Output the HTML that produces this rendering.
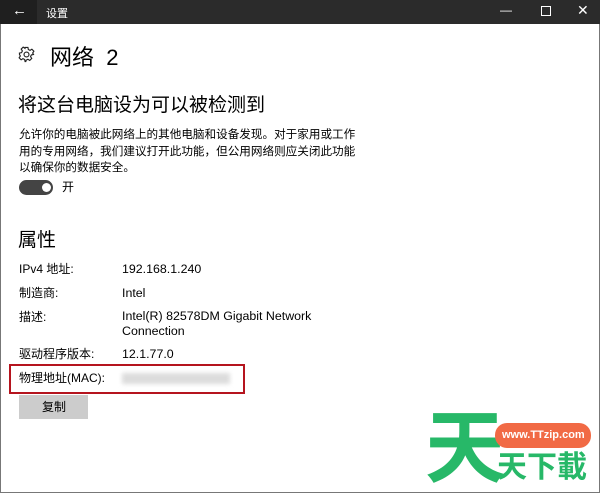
<!DOCTYPE html>
<html><head><meta charset="utf-8"><style>
body{margin:0;width:600px;height:493px;overflow:hidden;background:#fff;font-family:"Liberation Sans","Noto Sans CJK SC",sans-serif;color:#000;position:relative}
.tb{position:absolute;left:0;top:0;width:600px;height:24px;background:#2b2b2b;color:#fff}
.bk{position:absolute;left:0;top:0;width:37px;height:24px;background:#1f1f1f}
.a{position:absolute;white-space:nowrap}
.bl{position:absolute;left:0;top:24px;width:1px;height:469px;background:#777}
.br{position:absolute;right:0;top:24px;width:1px;height:469px;background:#777}
.bb{position:absolute;left:0;bottom:0;width:600px;height:1px;background:#777}
.s{font-size:12px;line-height:16px}
.v{font-size:12.4px;line-height:16px}
</style></head><body>
<div class="tb"><div class="bk"></div>
<span class="a" style="left:12px;top:2px;font-size:15px">←</span>
<span class="a" style="left:46px;top:5px;font-size:11px">设置</span>
<span class="a" style="left:500px;top:3px;font-size:12px">—</span>
<span class="a" style="left:541px;top:6px;width:8px;height:8px;border:1px solid #fff"></span>
<span class="a" style="left:577px;top:2px;font-size:14px">✕</span>
</div>
<div class="bl"></div><div class="br"></div><div class="bb"></div>
<svg class="a" style="left:18px;top:46px" width="17" height="17" viewBox="0 0 24 24" fill="none" stroke="#222" stroke-width="1.6"><path d="M10 2h4l.6 3 2.4 1.2 2.6-1.7 2.8 2.8-1.7 2.6L21.9 12l0 0 -3 .6-1.2 2.4 1.7 2.6-2.8 2.8-2.6-1.7L11.6 19.9 11 22H10l-.6-3-2.4-1.2-2.6 1.7-2.8-2.8 1.7-2.6L2.1 12 2 10l3-.6 1.2-2.4-1.7-2.6 2.8-2.8 2.6 1.7L10 2z"/><circle cx="12" cy="12" r="3.5"/></svg>
<span class="a" style="left:50px;top:40px;font-size:22px">网络&nbsp;&nbsp;2</span>
<span class="a" style="left:18px;top:90px;font-size:19px">将这台电脑设为可以被检测到</span>
<div class="a" style="left:19px;top:127px;font-size:11.6px;line-height:16.5px;white-space:normal;width:342px">允许你的电脑被此网络上的其他电脑和设备发现。对于家用或工作用的专用网络，我们建议打开此功能，但公用网络则应关闭此功能以确保你的数据安全。</div>
<div class="a" style="left:19px;top:180px;width:34px;height:15px;border-radius:8px;background:#444"></div>
<div class="a" style="left:42px;top:183px;width:9px;height:9px;border-radius:50%;background:#fff"></div>
<span class="a s" style="left:62px;top:179px">开</span>
<span class="a" style="left:18px;top:225px;font-size:19px">属性</span>
<span class="a s" style="left:19px;top:261px">IPv4 地址:</span><span class="a v" style="left:122px;top:261px">192.168.1.240</span>
<span class="a s" style="left:19px;top:285px">制造商:</span><span class="a v" style="left:122px;top:285px">Intel</span>
<span class="a s" style="left:19px;top:309px">描述:</span><span class="a v" style="left:122px;top:309px;line-height:15px">Intel(R) 82578DM Gigabit Network<br>Connection</span>
<span class="a s" style="left:19px;top:346px">驱动程序版本:</span><span class="a v" style="left:122px;top:346px">12.1.77.0</span>
<div class="a" style="left:9px;top:364px;width:232px;height:26px;border:2px solid #b5141e"></div>
<span class="a s" style="left:19px;top:370px">物理地址(MAC):</span>
<div class="a" style="left:122px;top:373px;width:108px;height:11px;background:#dcdcdc;filter:blur(2px)"></div>
<div class="a" style="left:19px;top:395px;width:69px;height:24px;background:#ccc"></div>
<span class="a s" style="left:42px;top:399px">复制</span>
<span class="a" style="left:425px;top:404px;font-size:80px;font-weight:bold;color:#27b868;line-height:90px">天</span>
<div class="a" style="left:495px;top:423px;width:96px;height:25px;border-radius:12px;background:#f16a45"></div>
<span class="a" style="left:502px;top:429px;font-size:11px;font-weight:bold;color:#fff">www.TTzip.com</span>
<span class="a" style="left:497px;top:450px;font-size:30px;font-weight:bold;color:#27b868;line-height:36px">天下載</span>
</body></html>
